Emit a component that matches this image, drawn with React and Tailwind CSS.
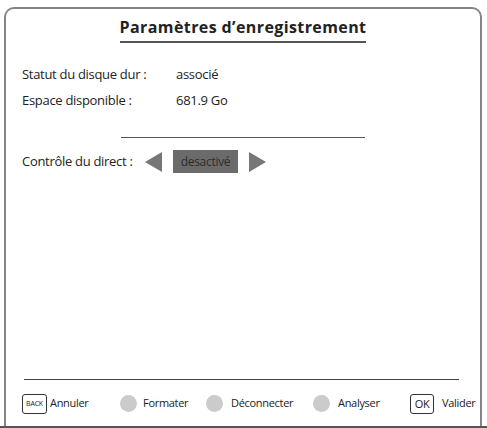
import React from "react";

const font = { fontFamily: '"Open Sans", "Liberation Sans", sans-serif' };

function Triangle({ dir }) {
  return (
    <svg width="18" height="20" viewBox="0 0 18 20" className="shrink-0">
      {dir === "left" ? (
        <polygon points="17,0 17,20 0,10" fill="#777777" />
      ) : (
        <polygon points="1,0 1,20 18,10" fill="#777777" />
      )}
    </svg>
  );
}

function Dot() {
  return <span className="w-[17px] h-[17px] rounded-full bg-[#cbcbcb] shrink-0" />;
}

export default function App() {
  return (
    <div className="w-[487px] h-[428px] bg-white pt-[7px] text-[#222]" style={font}>
      <div className="ml-[4px] w-[478px] h-[419px] border-2 border-b-0 border-[#858585] rounded-t-[10px] flex flex-col">
        {/* Header */}
        <div className="flex justify-center mt-[8px]">
          <span className="text-[16px] leading-[20px] font-bold text-[#222] border-b-2 border-[#555] pb-[4px] tracking-[0.4px]">
            Paramètres d’enregistrement
          </span>
        </div>

        {/* Disk info */}
        <div className="pl-[16px] mt-[21px] text-[13px] leading-[20px] tracking-[-0.3px]">
          <div className="flex">
            <span className="w-[154px]">Statut du disque dur :</span>
            <span>associé</span>
          </div>
          <div className="flex mt-[6px]">
            <span className="w-[154px]">Espace disponible :</span>
            <span>681.9 Go</span>
          </div>
        </div>

        <div className="mx-auto mt-[27px] w-[244px] h-px bg-[#555]" />

        {/* Live control */}
        <div className="flex items-center pl-[16px] mt-[12px] h-[23px] text-[13px] tracking-[-0.3px]">
          <span className="w-[123px]">Contrôle du direct :</span>
          <Triangle dir="left" />
          <span className="ml-[10px] w-[65px] h-[23px] bg-[#6b6b6b] text-[#2b2b2b] text-[12px] flex items-center justify-center">
            desactivé
          </span>
          <span className="ml-[10px]">
            <Triangle dir="right" />
          </span>
        </div>

        {/* Footer */}
        <div className="mt-auto pb-[12px]">
          <div className="ml-[18px] mr-[21px] h-px bg-[#444]" />
          <div className="flex items-center pl-[16px] mt-[13px] h-[21px] text-[11px] tracking-[-0.3px]">
            <div className="w-[98px] flex items-center">
              <span className="w-[25px] h-[20px] border border-[#333] rounded-[3px] text-[7px] leading-none flex items-center justify-center tracking-[-0.2px]">
                BACK
              </span>
              <span className="ml-[3px]">Annuler</span>
            </div>
            <div className="w-[86px] flex items-center">
              <Dot />
              <span className="ml-[6px]">Formater</span>
            </div>
            <div className="w-[107px] flex items-center">
              <Dot />
              <span className="ml-[8px]">Déconnecter</span>
            </div>
            <div className="w-[97px] flex items-center">
              <Dot />
              <span className="ml-[8px]">Analyser</span>
            </div>
            <div className="flex items-center">
              <span className="w-[24px] h-[20px] border border-[#333] rounded-[3px] text-[11px] leading-none flex items-center justify-center">
                OK
              </span>
              <span className="ml-[8px]">Valider</span>
            </div>
          </div>
        </div>
      </div>
      <div className="h-[2px] w-full bg-[#555]" />
    </div>
  );
}
